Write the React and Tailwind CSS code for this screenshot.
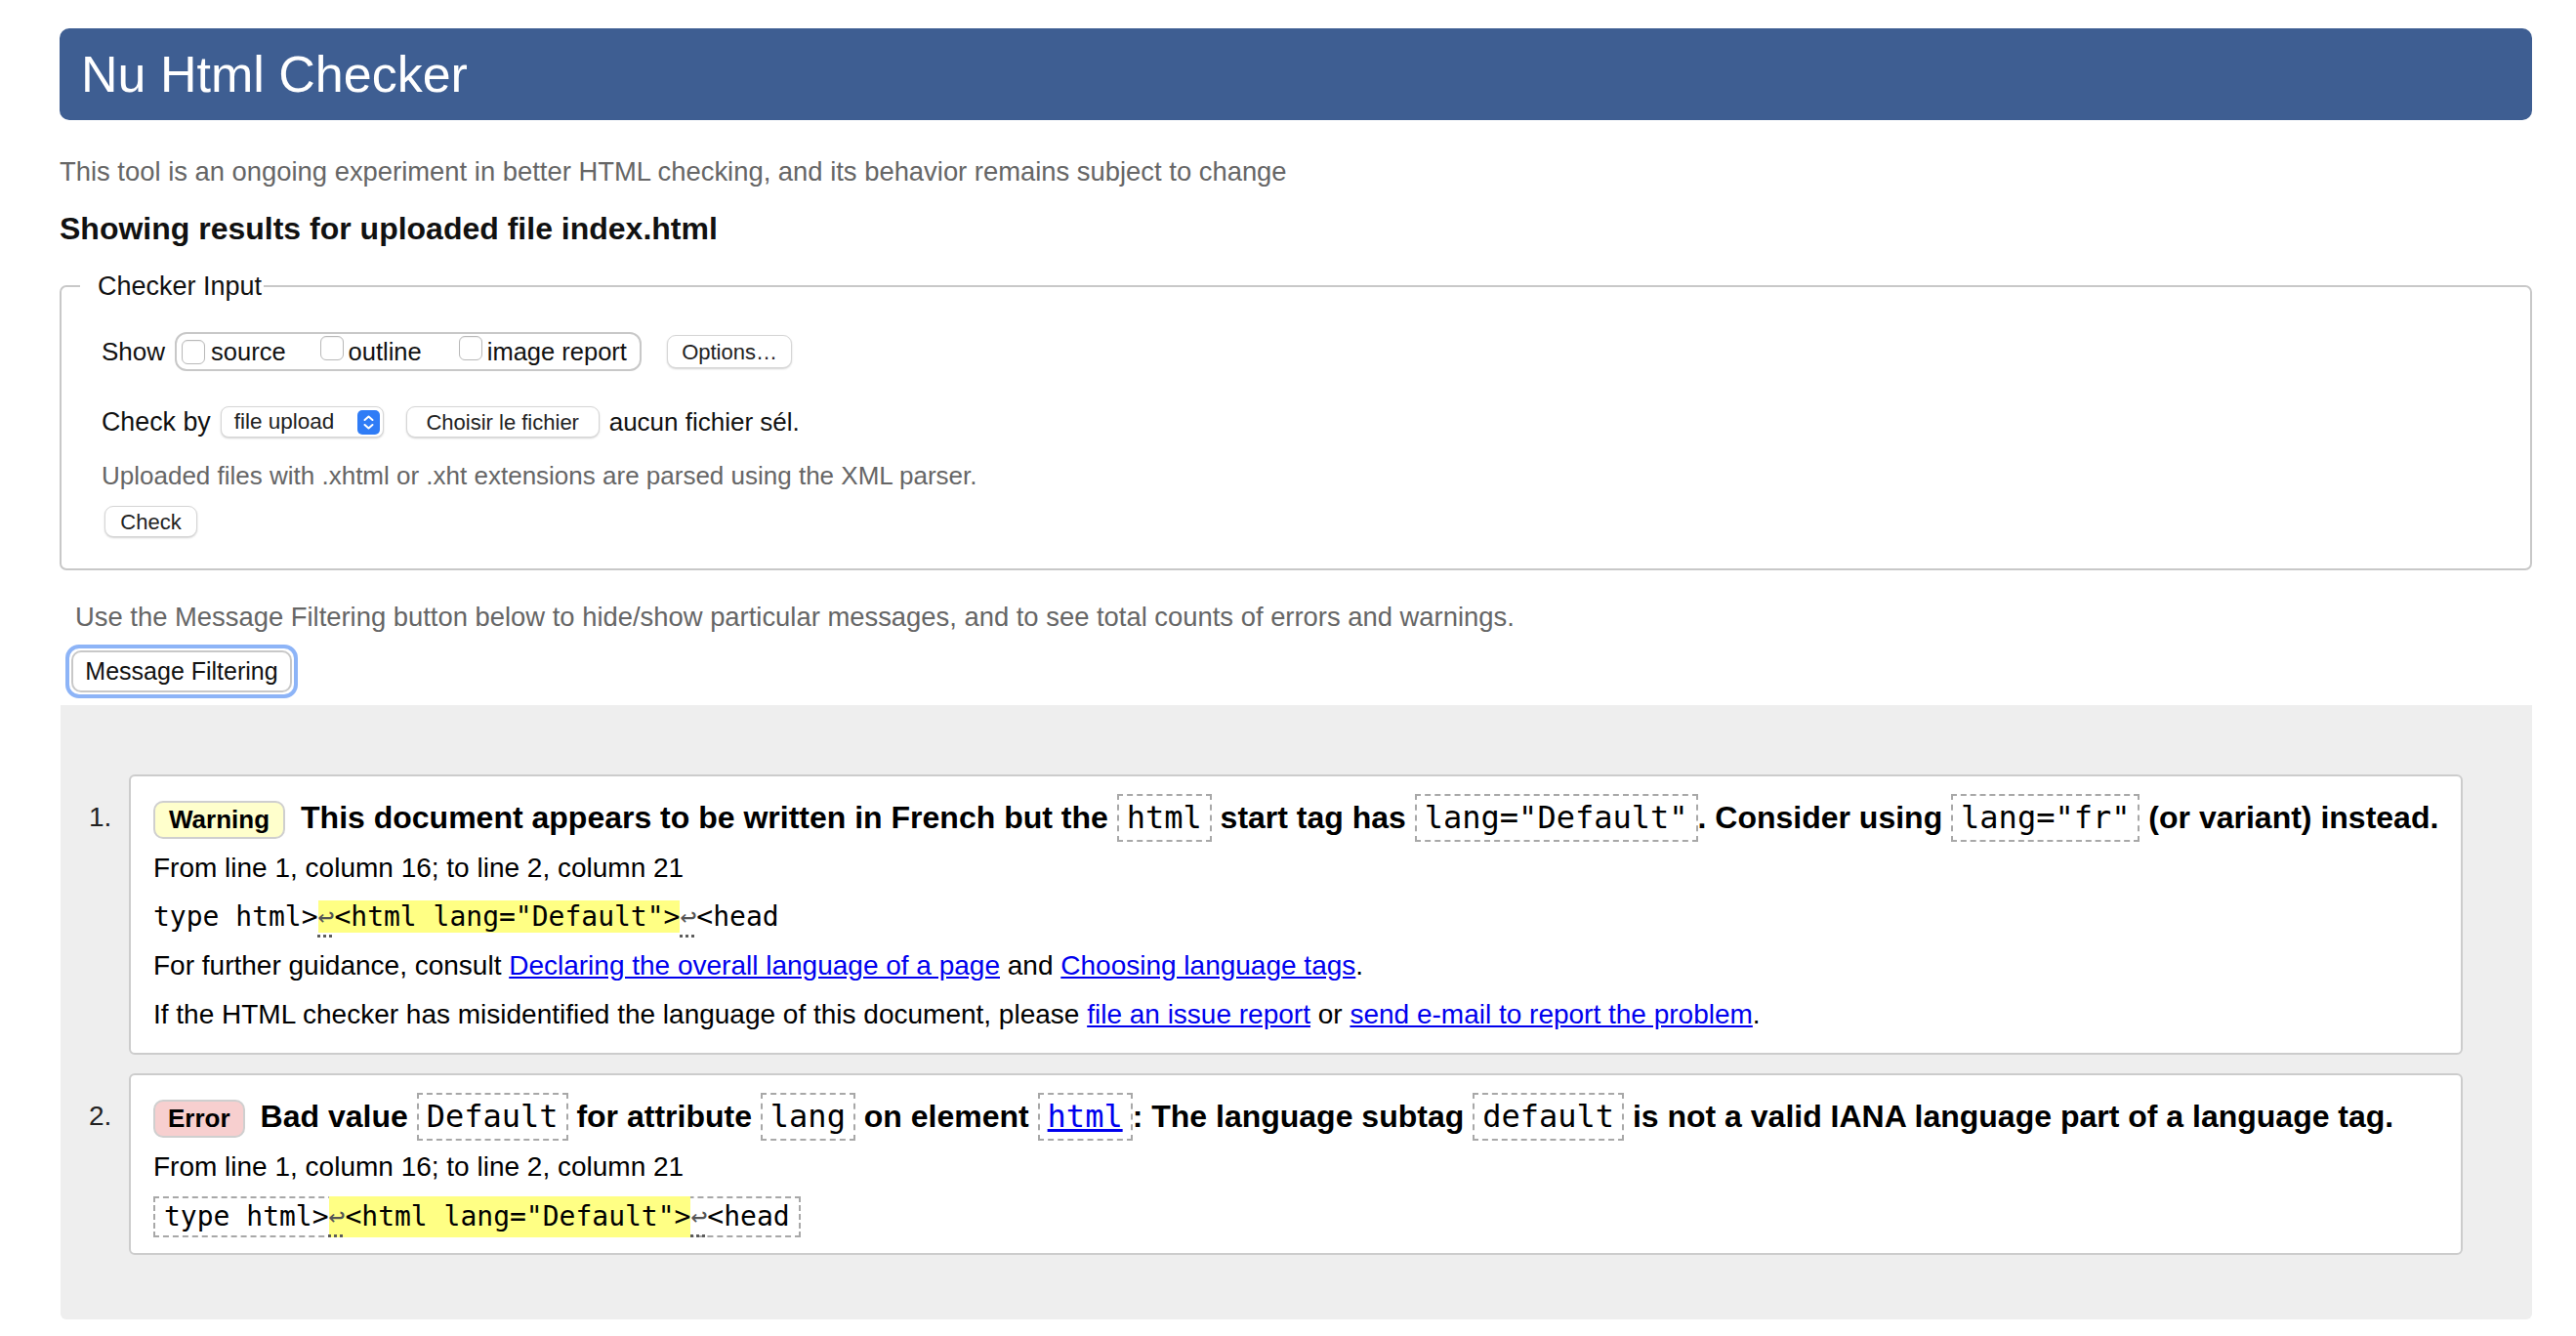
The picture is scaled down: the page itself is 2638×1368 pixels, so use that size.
const sans = "font-['Liberation_Sans',Arial,sans-serif]"
const mono = "font-['DejaVu_Sans_Mono','Liberation_Mono',monospace]"

function Box({ children }) {
  return (
    <code className={`${mono} inline-block border-2 border-dashed border-[#a8a8a8] px-[8px] leading-[45px] font-normal`}>
      {children}
    </code>
  )
}

function Arrow() {
  return <span className="text-[#555] underline decoration-dotted underline-offset-[9px]">↩</span>
}

function Source() {
  return (
    <>
      type html&gt;<span className="bg-[#ffff84]"><Arrow />&lt;html lang="Default"&gt;</span><Arrow />&lt;head
    </>
  )
}

function Checkbox() {
  return <span className="inline-block w-[24px] h-[25px] rounded-[6px] border border-[#b9b9b9] bg-white shadow-[inset_0_1px_1px_rgba(0,0,0,0.06)]" />
}

function MacButton({ children, className = '' }) {
  return (
    <button className={`flex items-center justify-center bg-white border border-[#d6d6d6] rounded-[9px] shadow-[0_1px_2px_rgba(0,0,0,0.18)] text-[22px] text-[#222] ${className}`}>
      {children}
    </button>
  )
}

function Badge({ kind }) {
  const bg = kind === 'Warning' ? 'bg-[#ffffcc] px-[14px]' : 'bg-[#f7cfcf] px-[13px]'
  return (
    <span className={`inline-block ${bg} border-2 border-[#cfcfcf] rounded-[10px] leading-[35px] text-[26px] font-bold mr-[16px]`}>
      {kind}
    </span>
  )
}

export default function App() {
  return (
    <div className={`min-h-screen bg-white text-black ${sans}`}>
      <div className="ml-[61px] w-[2532px] pt-[29px]">
        {/* header */}
        <div className="h-[94px] rounded-[10px] bg-[#3e5e92] pl-[22px] flex items-center">
          <h1 className="text-white text-[52px] leading-none">Nu Html Checker</h1>
        </div>

        <p className="mt-[38px] text-[27.4px] leading-[30px] text-[#666]">
          This tool is an ongoing experiment in better HTML checking, and its behavior remains subject to change
        </p>
        <h2 className="mt-[23px] text-[32px] leading-[40px] font-bold text-[#111]">
          Showing results for uploaded file index.html
        </h2>

        {/* checker input */}
        <fieldset className="mt-[24px] border-2 border-[#c8c8c8] rounded-[7px] pl-[41px] pb-[32px]">
          <legend className="ml-[-22px] pl-[18px] pr-[2px] text-[27px] leading-[30px] text-[#111]">Checker Input</legend>

          <div className="mt-[32px] flex items-center h-[40px] text-[25.5px] text-[#111]">
            <span className="mr-[10px] text-[26px]">Show</span>
            <div className="flex items-center h-[40px] w-[478px] rounded-[12px] border-2 border-[#c8c8c8] pl-[5px]">
              <Checkbox /><span className="ml-[6px]">source</span>
              <span className="ml-[35px]"><Checkbox /></span><span className="ml-[5px]">outline</span>
              <span className="ml-[38px]"><Checkbox /></span><span className="ml-[5px]">image report</span>
            </div>
            <MacButton className="ml-[26px] w-[128px] h-[34px]">Options…</MacButton>
          </div>

          <div className="mt-[36px] flex items-center h-[32px] text-[26.8px] text-[#111]">
            <span>Check by</span>
            <div className="ml-[10px] w-[167px] h-[32px] flex items-center justify-between pl-[13px] pr-[3px] bg-white border border-[#d6d6d6] rounded-[8px] shadow-[0_1px_2px_rgba(0,0,0,0.18)]">
              <span className="text-[22.5px] text-[#222]">file upload</span>
              <svg width="23" height="25" viewBox="0 0 23 25">
                <rect x="0" y="0" width="23" height="25" rx="5" fill="#2f7cf6" />
                <path d="M7.5 10 L11.5 6.5 L15.5 10" fill="none" stroke="#fff" strokeWidth="2" strokeLinecap="round" strokeLinejoin="round" />
                <path d="M7.5 15 L11.5 18.5 L15.5 15" fill="none" stroke="#fff" strokeWidth="2" strokeLinecap="round" strokeLinejoin="round" />
              </svg>
            </div>
            <MacButton className="ml-[23px] w-[198px] h-[32px]">Choisir le fichier</MacButton>
            <span className="ml-[10px] text-[26px]">aucun fichier sél.</span>
          </div>

          <p className="mt-[24px] text-[26px] leading-[30px] text-[#666]">
            Uploaded files with .xhtml or .xht extensions are parsed using the XML parser.
          </p>
          <MacButton className="mt-[16px] ml-[3px] w-[95px] h-[32px]">Check</MacButton>
        </fieldset>

        <p className="mt-[33px] pl-[16px] text-[27.4px] leading-[30px] text-[#666]">
          Use the Message Filtering button below to hide/show particular messages, and to see total counts of errors and warnings.
        </p>
        <div className="mt-[13px] ml-[6px] w-fit border-4 border-[#8db4f7] rounded-[14px] p-[2px]">
          <button className="block w-[226px] h-[43px] bg-white border-2 border-[#c8c8c8] rounded-[10px] text-[25px] text-[#111]">
            Message Filtering
          </button>
        </div>

        {/* results */}
        <div className="mt-[7px] ml-[1px] bg-[#eeeeee] rounded-b-[6px] pt-[71px] pb-[66px]">
          <div className="flex items-start">
            <span className="w-[70px] pl-[29px] mt-[19px] text-[28px] leading-[50px] text-[#222]">1.</span>
            <div className="flex-1 mr-[71px] bg-white border-2 border-[#cccccc] rounded-[6px] pl-[23px] pr-[10px] pt-[15px] pb-[14px] text-[28px]">
              <div className="text-[32px] font-bold leading-[54px] whitespace-nowrap">
                <Badge kind="Warning" />
                This document appears to be written in French but the <Box>html</Box> start tag has <Box>lang="Default"</Box>. Consider using <Box>lang="fr"</Box> (or variant) instead.
              </div>
              <p className="leading-[50px]">From line 1, column 16; to line 2, column 21</p>
              <p className={`${mono} leading-[50px] whitespace-pre`}><Source /></p>
              <p className="leading-[50px]">
                For further guidance, consult <a href="#" className="text-[#0000ee] underline">Declaring the overall language of a page</a> and <a href="#" className="text-[#0000ee] underline">Choosing language tags</a>.
              </p>
              <p className="leading-[50px]">
                If the HTML checker has misidentified the language of this document, please <a href="#" className="text-[#0000ee] underline">file an issue report</a> or <a href="#" className="text-[#0000ee] underline">send e-mail to report the problem</a>.
              </p>
            </div>
          </div>

          <div className="flex items-start mt-[19px]">
            <span className="w-[70px] pl-[29px] mt-[19px] text-[28px] leading-[50px] text-[#222]">2.</span>
            <div className="flex-1 mr-[71px] bg-white border-2 border-[#cccccc] rounded-[6px] pl-[23px] pr-[10px] pt-[15px] pb-[16px] text-[28px]">
              <div className="text-[32px] font-bold leading-[54px] whitespace-nowrap">
                <Badge kind="Error" />
                Bad value <Box>Default</Box> for attribute <Box>lang</Box> on element <Box><a href="#" className="text-[#0000ee] underline">html</a></Box>: The language subtag <Box>default</Box> is not a valid IANA language part of a language tag.
              </div>
              <p className="leading-[50px]">From line 1, column 16; to line 2, column 21</p>
              <div className="mt-[5px] flex">
                <code className={`${mono} h-[42px] flex items-center px-[9px] border-2 border-dashed border-[#a8a8a8] whitespace-pre`}><Source /></code>
              </div>
            </div>
          </div>
        </div>
      </div>
    </div>
  )
}
